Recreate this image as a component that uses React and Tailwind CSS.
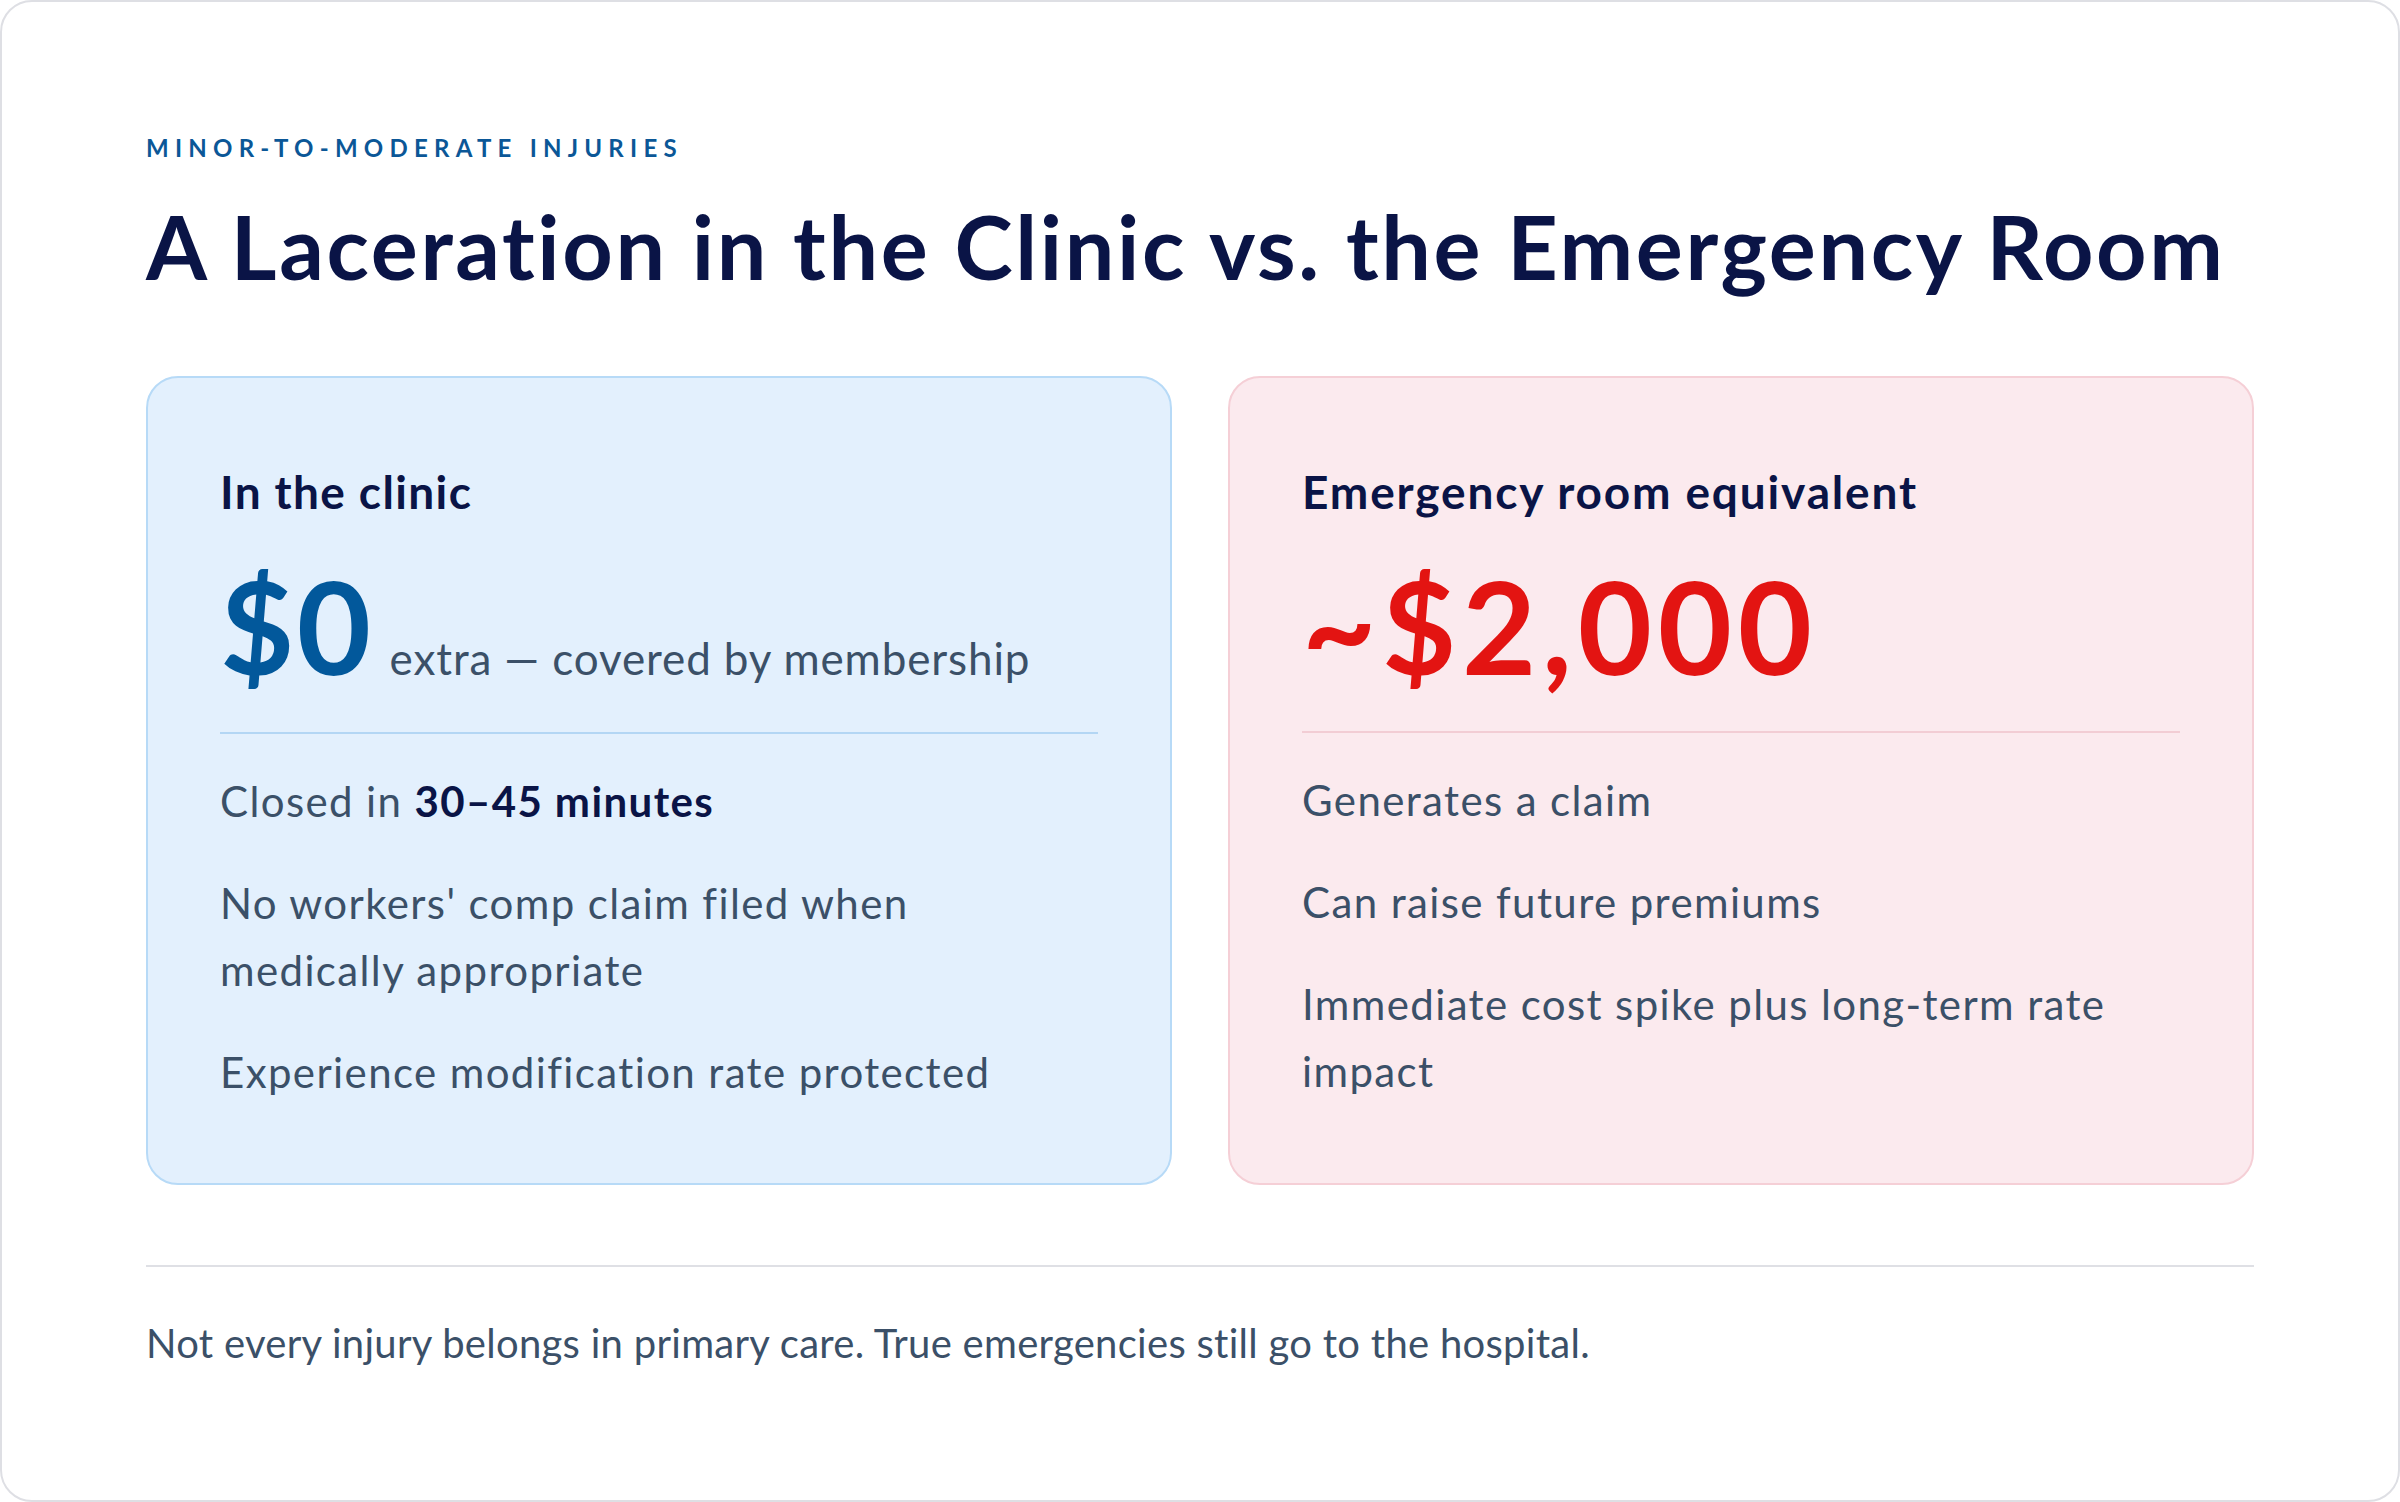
import React from "react";

function Card({ tone, title, price, priceNote, items }) {
  const blue = tone === "blue";
  return (
    <div
      className={
        blue
          ? "rounded-[32px] border-2 border-[#b7daf7] bg-[#e3f0fd] px-[72px] pt-[84px] pb-[77px]"
          : "rounded-[32px] border-2 border-[#f5cfd6] bg-[#fbeaee] px-[72px] pt-[84px] pb-[77px]"
      }
    >
      <h2
        className={
          blue
            ? "text-[46px] leading-[60px] font-bold tracking-[0.03em] text-[#0a1446]"
            : "text-[46px] leading-[60px] font-bold tracking-[0.04em] text-[#0a1446]"
        }
      >
        {title}
      </h2>
      <div className="mt-[40px] flex items-baseline gap-[16px]">
        <span
          className={
            blue
              ? "text-[128px] leading-none font-bold text-[#02589b] tracking-[0.02em]"
              : "text-[128px] leading-none font-bold text-[#e31412] tracking-[0.045em]"
          }
        >
          {price}
        </span>
        {priceNote && (
          <span className="text-[44px] leading-[1.5] tracking-[0.02em] text-[#3b5068]">
            {priceNote}
          </span>
        )}
      </div>
      <div className={blue ? "mt-[41px] h-[2px] bg-[#b3d6f4]" : "mt-[41px] h-[2px] bg-[#f2cdd4]"} />
      <ul className="mt-[34px] flex flex-col gap-[35px]">
        {items.map((it, i) => (
          <li key={i} className="text-[42px] leading-[67px] tracking-[0.033em] text-[#3b5068]">
            {it}
          </li>
        ))}
      </ul>
    </div>
  );
}

export default function App() {
  return (
    <div className="min-h-screen bg-white font-['Lato','Noto_Sans',sans-serif]">
      <div className="box-border h-[1502px] w-[2400px] rounded-[32px] border-2 border-[#dedfe4] bg-white px-[144px] pt-[128px]">
        <p className="text-[24px] leading-[36px] font-bold uppercase tracking-[0.26em] text-[#0b5797]">
          Minor-to-moderate injuries
        </p>
        <h1 className="mt-[32px] text-[88px] leading-[1.1] font-bold tracking-[0.03em] text-[#0a1446]">
          A Laceration in the Clinic vs. the Emergency Room
        </h1>
        <div className="mt-[81px] grid grid-cols-2 gap-[56px]">
          <Card
            tone="blue"
            title="In the clinic"
            price="$0"
            priceNote="extra — covered by membership"
            items={[
              <>
                Closed in <strong className="font-bold text-[#0a1446]">30–45 minutes</strong>
              </>,
              "No workers' comp claim filed when medically appropriate",
              "Experience modification rate protected",
            ]}
          />
          <Card
            tone="red"
            title="Emergency room equivalent"
            price="~$2,000"
            items={[
              "Generates a claim",
              "Can raise future premiums",
              "Immediate cost spike plus long-term rate impact",
            ]}
          />
        </div>
        <div className="mt-[80px] border-t-2 border-[#dfe0e5] pt-[44px]">
          <p className="text-[40px] leading-[64px] tracking-[0.007em] text-[#3b5068]">
            Not every injury belongs in primary care. True emergencies still go to the hospital.
          </p>
        </div>
      </div>
    </div>
  );
}
